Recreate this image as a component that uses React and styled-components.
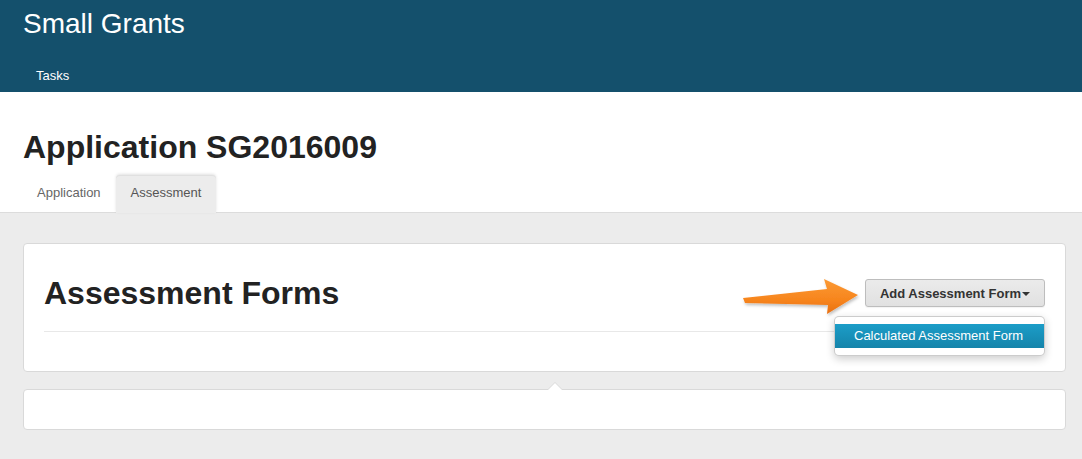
import React from "react";
import styled, { createGlobalStyle } from "styled-components";

const GlobalStyle = createGlobalStyle`
  html, body {
    margin: 0;
    padding: 0;
    background: #ececec;
  }
  body {
    font-family: "Liberation Sans", Arial, sans-serif;
    color: #222;
  }
  * {
    box-sizing: border-box;
  }
`;

const Page = styled.div`
  min-height: 100vh;
  display: flex;
  flex-direction: column;
`;

const TopBar = styled.header`
  background: #14506c;
  padding-left: 23px;
  height: 92px;
`;

const Brand = styled.div`
  padding-top: 4px;
  font-size: 28px;
  line-height: 40px;
  color: #fff;
`;

const Nav = styled.nav`
  display: flex;
`;

const NavItem = styled.a`
  padding: 22px 13px 6px;
  font-size: 13px;
  line-height: 20px;
  color: #fff;
  text-decoration: none;
`;

const TitleSection = styled.section`
  background: #fff;
  padding: 37px 0 0 23px;
  border-bottom: 1px solid #dcdcdc;
`;

const PageTitle = styled.h1`
  margin: 0;
  font-size: 32px;
  line-height: 36px;
  font-weight: bold;
  color: #222;
`;

const Tabs = styled.ul`
  display: flex;
  list-style: none;
  margin: 10px 0 -1px -1px;
  padding: 0;
`;

const Tab = styled.li`
  padding: 8px 15px 10px;
  font-size: 13px;
  line-height: 20px;
  color: ${(p) => (p.$active ? "#555" : "#666")};
  background: ${(p) => (p.$active ? "#ececec" : "transparent")};
  border-radius: 4px 4px 0 0;
  box-shadow: ${(p) =>
    p.$active ? "0 -1px 3px rgba(0, 0, 0, 0.12), inset 0 1px 0 #e0e0e0" : "none"};
  position: relative;
`;

const Body = styled.main`
  flex: 1;
  padding: 30px 16px 0 23px;
  display: flex;
  flex-direction: column;
  gap: 17px;
`;

const Panel = styled.div`
  position: relative;
  background: #fff;
  border: 1px solid #d9d9d9;
  border-radius: 4px;
  padding: ${(p) => (p.$compact ? "0" : "19px 20px 39px")};
  height: ${(p) => (p.$compact ? "41px" : "auto")};

  ${(p) =>
    p.$caret &&
    `
    &::before {
      content: "";
      position: absolute;
      top: -8px;
      left: 523px;
      border-left: 8px solid transparent;
      border-right: 8px solid transparent;
      border-bottom: 8px solid #d9d9d9;
    }
    &::after {
      content: "";
      position: absolute;
      top: -7px;
      left: 524px;
      border-left: 7px solid transparent;
      border-right: 7px solid transparent;
      border-bottom: 7px solid #fff;
    }
  `}
`;

const PanelHeader = styled.div`
  display: flex;
  align-items: center;
  justify-content: space-between;
  height: 60px;
`;

const PanelTitle = styled.h2`
  margin: 0;
  font-size: 32px;
  line-height: 36px;
  font-weight: bold;
  color: #222;
`;

const Rule = styled.hr`
  margin: 8px 0 0;
  border: 0;
  border-top: 1px solid #e8e8e8;
`;

const ActionGroup = styled.div`
  position: relative;
`;

const DropButton = styled.button`
  display: flex;
  align-items: center;
  height: 28px;
  padding: 0 14px;
  font-family: "Liberation Sans", Arial, sans-serif;
  font-size: 13px;
  font-weight: bold;
  color: #333;
  background: linear-gradient(#ebebeb, #e1e1e1);
  border: 1px solid #bdbdbd;
  border-radius: 3px;
  box-shadow: 0 1px 1px rgba(0, 0, 0, 0.05);
  cursor: pointer;
`;

const Caret = styled.span`
  display: inline-block;
  margin-left: 1px;
  margin-top: 2px;
  border-left: 4px solid transparent;
  border-right: 4px solid transparent;
  border-top: 4px solid #333;
`;

const Menu = styled.ul`
  position: absolute;
  top: calc(100% + 9px);
  right: 0;
  width: 211px;
  margin: 0;
  padding: 7px 0;
  list-style: none;
  background: #fff;
  border: 1px solid rgba(0, 0, 0, 0.2);
  border-radius: 5px;
  box-shadow: 0 3px 8px rgba(0, 0, 0, 0.2);
  z-index: 2;
`;

const MenuItem = styled.li`
  padding: 0 19px;
  font-size: 13px;
  line-height: 24px;
  white-space: nowrap;
  color: ${(p) => (p.$active ? "#fff" : "#333")};
  background: ${(p) =>
    p.$active ? "linear-gradient(#1c9dc8, #1584aa)" : "transparent"};
`;

const Pointer = styled.svg`
  position: absolute;
  left: -126px;
  top: -4px;
  overflow: visible;
`;

const Arrow = () => (
  <Pointer width="120" height="40" viewBox="0 0 120 40">
    <defs>
      <linearGradient id="arrowFill" x1="0" y1="0" x2="0" y2="1">
        <stop offset="0" stopColor="#fb9a35" />
        <stop offset="0.6" stopColor="#f7851d" />
        <stop offset="1" stopColor="#e86f12" />
      </linearGradient>
      <filter id="arrowShadow" x="-10%" y="-30%" width="120%" height="160%">
        <feDropShadow dx="1" dy="2" stdDeviation="1.5" floodColor="#000" floodOpacity="0.25" />
      </filter>
    </defs>
    <polygon
      points="4,23 88,14 85,4 119,20 88,39 89,30 6,28"
      fill="url(#arrowFill)"
      filter="url(#arrowShadow)"
    />
  </Pointer>
);

const App = () => {
  return (
    <Page>
      <GlobalStyle />
      <TopBar>
        <Brand>Small Grants</Brand>
        <Nav>
          <NavItem href="#">Tasks</NavItem>
        </Nav>
      </TopBar>
      <TitleSection>
        <PageTitle>Application SG2016009</PageTitle>
        <Tabs>
          <Tab>Application</Tab>
          <Tab $active>Assessment</Tab>
        </Tabs>
      </TitleSection>
      <Body>
        <Panel>
          <PanelHeader>
            <PanelTitle>Assessment Forms</PanelTitle>
            <ActionGroup>
              <Arrow />
              <DropButton>
                Add Assessment Form
                <Caret />
              </DropButton>
              <Menu>
                <MenuItem $active>Calculated Assessment Form</MenuItem>
              </Menu>
            </ActionGroup>
          </PanelHeader>
          <Rule />
        </Panel>
        <Panel $compact $caret />
      </Body>
    </Page>
  );
};

export default App;
